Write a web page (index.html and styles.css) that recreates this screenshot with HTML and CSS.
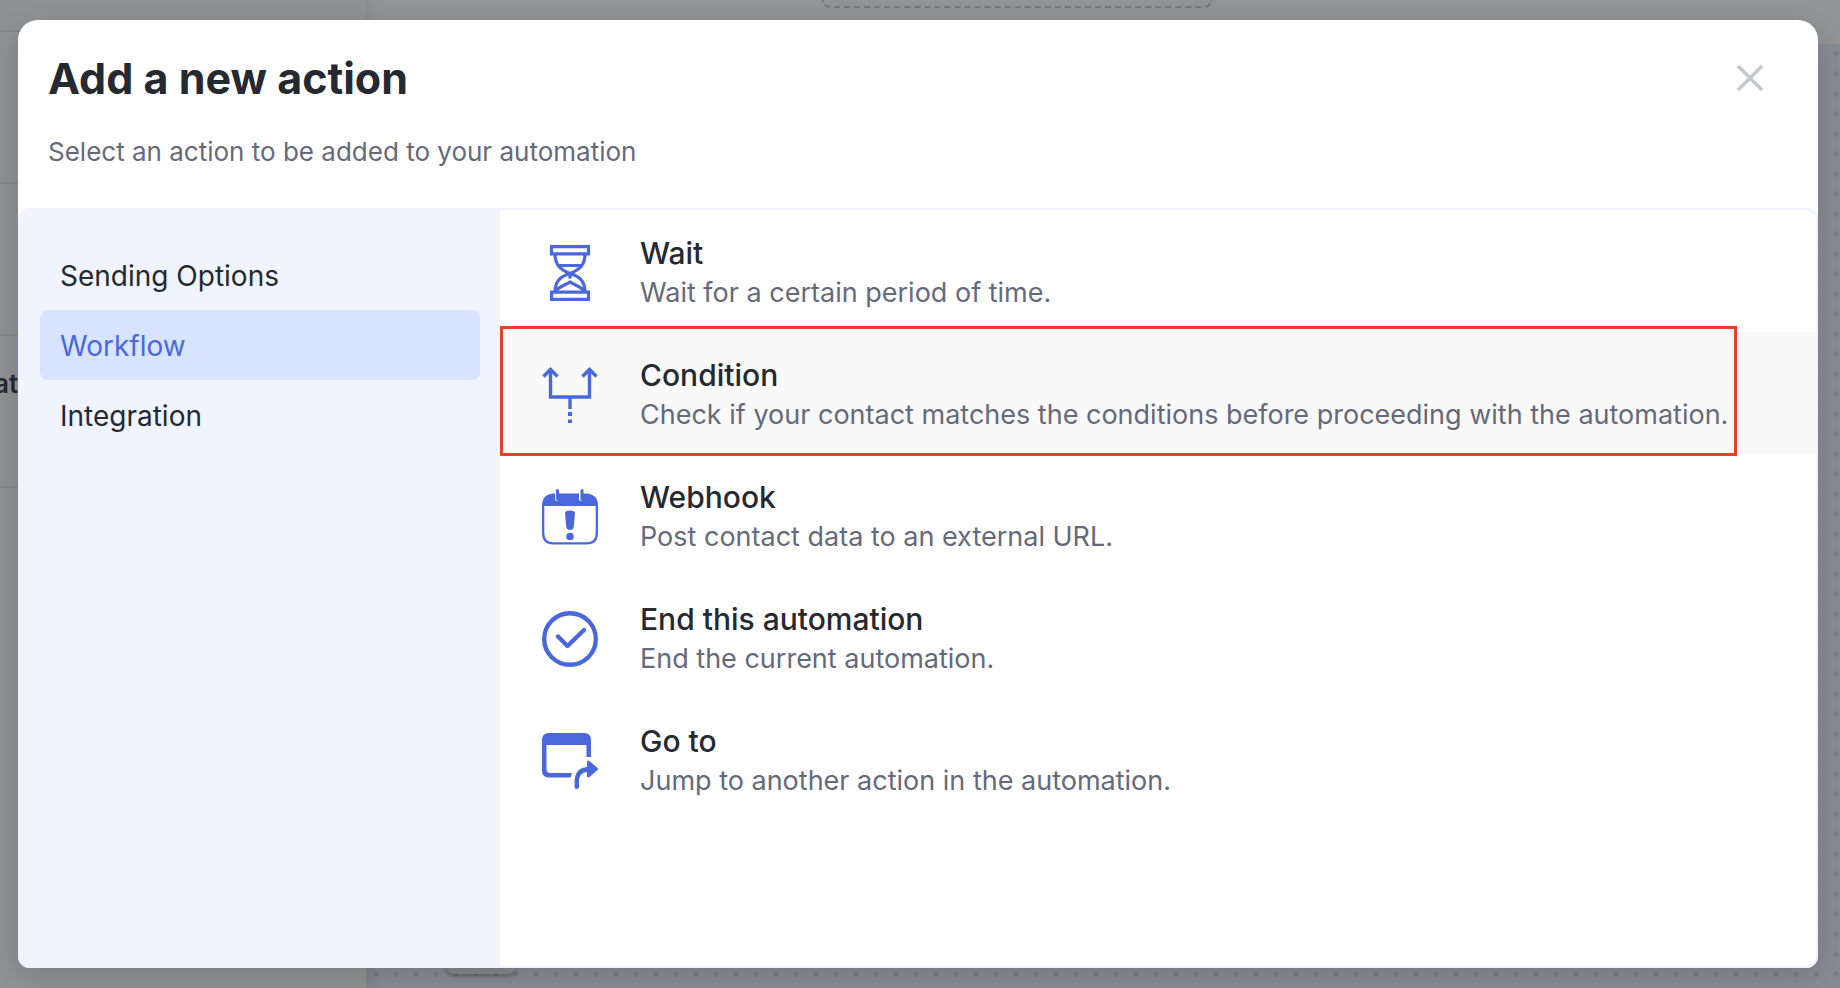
FILE: index.html
```html
<!DOCTYPE html>
<html lang="en">
<head>
<meta charset="utf-8">
<title>Add a new action</title>
<link rel="stylesheet" href="styles.css">
</head>
<body>
<div class="app" aria-hidden="true">
  <div class="app-side">
    <div class="side-cell side-cell-first"></div>
    <div class="side-cell"></div>
    <div class="side-cell"></div>
    <div class="side-cell side-cell-text">at</div>
  </div>
  <div class="app-main">
    <div class="app-top"><div class="drop-zone"></div></div>
    <div class="app-canvas"><div class="canvas-tool"></div></div>
  </div>
</div>
<div class="overlay">
  <section class="modal" role="dialog" aria-modal="true" aria-labelledby="modal-title">
    <header class="modal-header">
      <div class="modal-heading">
        <h1 class="modal-title" id="modal-title">Add a new action</h1>
        <p class="modal-subtitle">Select an action to be added to your automation</p>
      </div>
      <button class="close" type="button" aria-label="Close">
        <svg width="28" height="28" viewBox="0 0 28 28" fill="none" stroke="currentColor" stroke-width="3.400"><path d="M2 2l24 24M26 2L2 26"/></svg>
      </button>
    </header>
    <div class="modal-body">
      <nav class="tabs">
        <button class="tab" type="button">Sending Options</button>
        <button class="tab tab-active" type="button">Workflow</button>
        <button class="tab" type="button">Integration</button>
      </nav>
      <div class="actions">
        <button class="action" type="button">
          <svg class="icon" viewBox="0 0 56 56" fill="none" stroke="currentColor" stroke-width="3.200">
            <path d="M9.500 1.600h37v7.200h-37zM9.500 47.200h37v7.200h-37z"/>
            <path d="M13 9c0 10.500 5 15.500 15 19.500C38 24.500 43 19.500 43 9M13 47c0-10.500 5-15.500 15-18.500 10 3 15 8 15 18.500"/>
            <path d="M16.500 20.500h23M28 28v5.500M13.500 46.500C17 41 23 40.500 28 37c5 3.500 11 4 14.500 9.500"/>
          </svg>
          <span class="action-text"><span class="action-name">Wait</span><span class="action-desc">Wait for a certain period of time.</span></span>
        </button>
        <button class="action action-hover" type="button">
          <svg class="icon" viewBox="0 0 56 56" fill="none" stroke="currentColor" stroke-width="3.400">
            <path d="M8.500 3v27h39V3M1.500 9.500l7-7 7 7M40.500 9.500l7-7 7 7M28 30v12"/>
            <path stroke-width="4" d="M28 45v4M28 52.500v3.500"/>
          </svg>
          <span class="action-text"><span class="action-name">Condition</span><span class="action-desc">Check if your contact matches the conditions before proceeding with the automation.</span></span>
          <span class="highlight"></span>
        </button>
        <button class="action" type="button">
          <svg class="icon" viewBox="0 0 56 56" fill="currentColor">
            <path fill-rule="evenodd" d="M11 4.500h2V10q0 2 1.500 2t1.500-2V4.500h21V10q0 2 1.500 2t1.500-2V4.500h5q11 1 11 12V44q0 11.500-11.500 11.500h-33Q0 55.500 0 44V16.500q0-11 11-12zM2.300 17v27q0 9.300 9.200 9.300h33q9.200 0 9.200-9.300V17z"/>
            <path d="M14 1.500a1.500 1.500 0 0 1 3 0V11h-3zM38.500 1.500a1.500 1.500 0 0 1 3 0V11h-3z"/>
            <path d="M23 24q0-2.500 5-2.500t5 2.500l-1.300 14q-.4 3-3.700 3t-3.700-3z"/>
            <circle cx="28" cy="47.500" r="3.800"/>
          </svg>
          <span class="action-text"><span class="action-name">Webhook</span><span class="action-desc">Post contact data to an external URL.</span></span>
        </button>
        <button class="action" type="button">
          <svg class="icon" viewBox="0 0 56 56" fill="none" stroke="currentColor" stroke-width="4.400" stroke-linecap="round" stroke-linejoin="round">
            <circle cx="28" cy="28" r="25.800"/><path d="M16 25.500l9.500 9.500L42 19"/>
          </svg>
          <span class="action-text"><span class="action-name">End this automation</span><span class="action-desc">End the current automation.</span></span>
        </button>
        <button class="action" type="button">
          <svg class="icon" viewBox="0 0 56 56" fill="currentColor">
            <path d="M7 0h35q7 0 7 7v17h-4.500V12h-40v24q0 4 4 4H30l-1.500 4.500H7q-7 0-7-7V7q0-7 7-7z"/>
            <path d="M45 28.500q1-1.500 2.500-.5l8 7q1 1 0 2l-8 7q-2.500 1.500-2.500-1.500V39q-8 .5-8 9.500V54q0 2-2.200 2T32.600 54v-6Q33 35 45 34z"/>
          </svg>
          <span class="action-text"><span class="action-name">Go to</span><span class="action-desc">Jump to another action in the automation.</span></span>
        </button>
      </div>
    </div>
  </section>
</div>
</body>
</html>
```
FILE: styles.css
```css
* { box-sizing: border-box; }
body {
  margin: 0;
  font-family: Inter, "Liberation Sans", sans-serif;
  color: #242932;
  background: #8f9093;
}
button {
  font: inherit;
  color: inherit;
  border: 0;
  background: none;
  text-align: left;
  cursor: pointer;
}

/* Dimmed page behind the dialog */
.app {
  position: absolute;
  inset: 0;
  display: flex;
  overflow: hidden;
}
.app-side {
  width: 366px;
  flex: none;
  background: #909193;
  box-shadow: 0 0 16px rgba(0, 0, 0, .12);
  z-index: 1;
}
.side-cell { height: 152px; border-bottom: 2px solid #85868e; }
.side-cell-first { height: 32px; }
.side-cell-text {
  font-size: 26px;
  line-height: 96px;
  font-weight: 600;
  text-indent: -6px;
}
.app-main { flex: 1; display: flex; flex-direction: column; }
.app-top { height: 44px; background: #939498; }
.drop-zone {
  width: 390px;
  height: 8px;
  margin-left: 456px;
  border: 2px dashed #77787b;
  border-top: 0;
  border-radius: 0 0 8px 8px;
}
.app-canvas {
  flex: 1;
  display: flex;
  align-items: flex-end;
  padding: 0 80px 14px;
  background: radial-gradient(circle, #7b7d87 2px, transparent 3px) 0 0 / 20px 20px #888a94;
}
.canvas-tool {
  width: 70px;
  height: 70px;
  border-radius: 8px;
  background: #85878a;
  box-shadow: 0 2px 4px rgba(0, 0, 0, .3);
}

/* Dialog */
.overlay {
  position: relative;
  z-index: 2;
  display: flex;
  min-height: 100vh;
  padding: 20px 22px 20px 18px;
}
.modal {
  flex: 1;
  display: flex;
  flex-direction: column;
  background: #fff;
  border-radius: 20px 20px 12px 12px;
  box-shadow: 0 8px 32px rgba(0, 0, 0, .14);
}
.modal-header {
  display: flex;
  justify-content: space-between;
  align-items: flex-start;
  padding: 32px 46px 36px 30px;
}
.modal-title {
  margin: 0 0 28px;
  font-size: 43px;
  line-height: 52px;
  font-weight: 700;
}
.modal-subtitle {
  margin: 0;
  font-size: 26px;
  line-height: 40px;
  color: #646a7c;
}
.close {
  display: flex;
  margin-top: 4px;
  padding: 8px;
  color: #c4c5d0;
}
.modal-body {
  flex: 1;
  display: flex;
  border: 2px solid #eef3ff;
  border-radius: 12px;
}
.tabs {
  width: 480px;
  flex: none;
  display: flex;
  flex-direction: column;
  padding: 30px 20px;
  background: #eff4ff;
  border-radius: 10px 0 0 10px;
}
.tab {
  padding: 16px 20px 14px;
  font-size: 28px;
  line-height: 40px;
  border-radius: 8px;
}
.tab-active { color: #4a68dc; background: #d8e4ff; }
.actions { flex: 1; display: flex; flex-direction: column; }
.action {
  position: relative;
  display: flex;
  align-items: center;
  gap: 42px;
  padding: 23px 42px 19px;
  line-height: 40px;
}
.action-hover { background: #f9f9f9; }
.icon {
  width: 56px;
  height: 56px;
  flex: none;
  color: #4a68dc;
  overflow: visible;
}
.action-text { display: flex; flex-direction: column; }
.action-name { font-size: 30px; font-weight: 500; }
.action-desc { font-size: 27px; color: #646a7c; }
.highlight {
  position: absolute;
  inset: -6px 79px -2px 0;
  border: 3px solid #f03e24;
  pointer-events: none;
}
```
